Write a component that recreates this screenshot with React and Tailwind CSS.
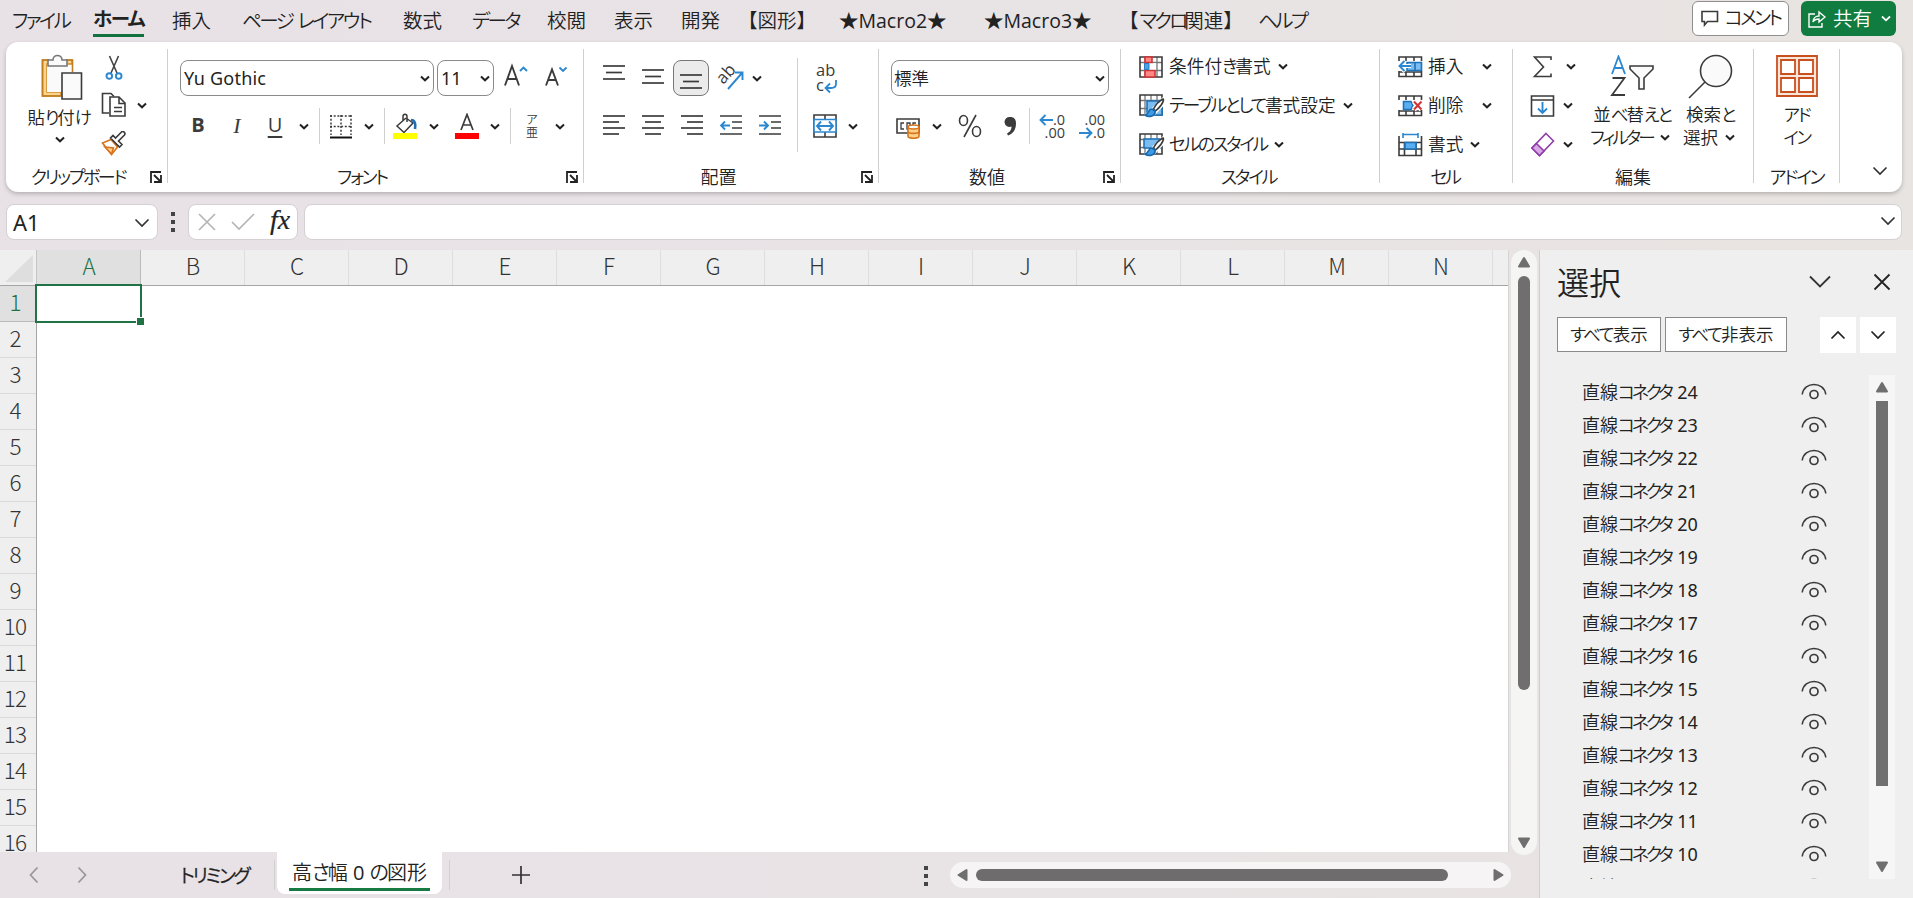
const menuItems = [
  { label: 'ファイル', className: 'w-[81px]' },
  { label: 'ホーム', className: 'w-[79px]', active: true, tight: 'tracking-[-0.08em]' },
  { label: '挿入', className: 'w-[70px]' },
  { label: 'ページ レイアウト', className: 'w-[161px]', tight: 'tracking-[-0.125em]' },
  { label: '数式', className: 'w-[69px]' },
  { label: 'データ', className: 'w-[75px]' },
  { label: '校閲', className: 'w-[67px]' },
  { label: '表示', className: 'w-[67px]' },
  { label: '開発', className: 'w-[57px]' },
  { label: '【図形】', className: 'w-[101px] [font-feature-settings:normal]' },
  { label: '★Macro2★', className: 'w-[145px] font-normal' },
  { label: '★Macro3★', className: 'w-[135px] font-normal' },
  { label: '【マクロ関連】', className: 'w-[139px] [font-feature-settings:normal]', tight: 'tracking-[-0.22em]' },
  { label: 'ヘルプ', className: 'w-[60px]' },
];

const columns = ['A', 'B', 'C', 'D', 'E', 'F', 'G', 'H', 'I', 'J', 'K', 'L', 'M', 'N'];
const rows = Array.from({ length: 16 }, (_, i) => i + 1);
const shapes = Array.from({ length: 16 }, (_, i) => 24 - i);

// Kana are set tighter than kanji, as in a UI font
function Jp({ children, tight = 'tracking-[-0.13em]' }) {
  return children.split(/([ぁ-ヿ]+)/).map((part, i) =>
    i % 2 ? (
      <span key={i} className={tight}>
        {part}
      </span>
    ) : (
      part
    )
  );
}

function Svg({ w, h, className = '', children }) {
  return (
    <svg
      width={w}
      height={h}
      viewBox={`0 0 ${w} ${h}`}
      fill="none"
      stroke="#3b3b3b"
      strokeWidth="1.6"
      className={`shrink-0 ${className}`}
    >
      {children}
    </svg>
  );
}

function Chevron({ className = 'w-5' }) {
  return (
    <span className={`flex shrink-0 justify-center ${className}`}>
      <Svg w={10} h={7}>
        <path d="M1 1.500 5 5.300 9 1.500" stroke="#222" strokeWidth="2" />
      </Svg>
    </span>
  );
}

function BigChevron({ className = '', color = '#333', up = false }) {
  return (
    <Svg w={16} h={10} className={className}>
      <path d={up ? 'M1.5 8.5 8 2l6.5 6.5' : 'M1.5 1.5 8 8l6.5-6.5'} stroke={color} strokeWidth="1.7" />
    </Svg>
  );
}

function Divider({ className = '' }) {
  return (
    <span className={`flex h-full shrink-0 justify-center ${className}`}>
      <span className="h-full w-px bg-[#d0d0d0]" />
    </span>
  );
}

function Cell({ className = '', children }) {
  return <span className={`flex h-full shrink-0 items-center justify-center ${className}`}>{children}</span>;
}

function Group({ label, launcher, className = '', labelClass = '', children }) {
  return (
    <section className={`mt-[7px] flex h-[134px] shrink-0 flex-col border-r border-[#cfcfcf] ${className}`}>
      <div className="flex min-h-0 flex-1">{children}</div>
      <div className="flex h-3 items-center">
        <span className={`flex-1 whitespace-nowrap text-center text-[18px] leading-3 ${labelClass}`}>
          <Jp>{label}</Jp>
        </span>
        {launcher && (
          <Svg w={12} h={12} className="mr-[5px]">
            <path d="M1 12V1h10M4 4l6 6M11 4v7H4" stroke="#222" strokeWidth="1.8" />
          </Svg>
        )}
      </div>
    </section>
  );
}

function Lines({ y, rows: lines }) {
  return (
    <Svg w={22} h={24}>
      {lines.map(([x1, x2], i) => (
        <path key={i} d={`M${x1} ${y[i]}H${x2}`} strokeWidth="1.7" />
      ))}
    </Svg>
  );
}

function PasteIcon() {
  return (
    <Svg w={42} h={46}>
      <path d="M8 6H1.500v36H20v-4H6V10h25V6h-6" fill="#fbd58a" stroke="#d18a2e" />
      <path d="M8 6H1.500v36H20M25 6h6.500v12" stroke="#c07c22" />
      <path d="M6 10h20v8h-6v20H6z" fill="#fafafa" stroke="none" />
      <path d="M7 12V6h5c0-6 9-6 9 0h5v6z" fill="#fafafa" stroke="#777" />
      <path d="M21 19h19.500v26H21z" fill="#fafafa" />
    </Svg>
  );
}

function ScissorsIcon() {
  return (
    <Svg w={18} h={26}>
      <path d="M4.500 1l7.500 17M13.500 1 6 18" stroke="#444" />
      <circle cx="4.300" cy="21" r="2.800" stroke="#2b88d0" strokeWidth="1.9" />
      <circle cx="13.700" cy="21" r="2.800" stroke="#2b88d0" strokeWidth="1.9" />
    </Svg>
  );
}

function CopyIcon() {
  return (
    <Svg w={26} h={26}>
      <path d="M8 21H1.500V1.500H10l3 3" />
      <path d="M9 5h9l6 6v13H9z" fill="#fff" />
      <path d="M18 5v6.500h6M13 15.500h8M13 19.500h8" />
    </Svg>
  );
}

function BrushIcon() {
  return (
    <Svg w={26} h={26}>
      <path d="M10 8.500 1.500 12l9 11.500L16.500 16z" fill="#fff" stroke="#d9731a" />
      <path d="M4 16l8.500 1-2 6z" fill="#fbd08a" stroke="#d9731a" />
      <path d="M9.500 7l9 9 2.500-2.500-3.500-3.500 6-6c1.500-2-1.500-4.500-3-3l-6 6L12 4.500z" fill="#fff" />
    </Svg>
  );
}

function BordersIcon() {
  return (
    <Svg w={24} h={25}>
      <path d="M1 2h22M1 12.500h22M2 1v20M12 1v20M22 1v20" strokeDasharray="2 1.700" strokeWidth="1.500" />
      <path d="M1 23.500h22" stroke="#111" strokeWidth="2" />
    </Svg>
  );
}

function FillIcon() {
  return (
    <Svg w={26} h={27}>
      <path d="M13 5 4 13l7 6.500 9-9.500-7-5M10 8V3.500c0-3 4-3 4 0V9" strokeWidth="1.500" />
      <path d="M18 7c4 0 5 4 4 9" stroke="#1f6fb5" strokeWidth="2.600" />
      <path d="M0 20h24v6H0z" fill="#ff0" stroke="none" />
    </Svg>
  );
}

function TableGrid() {
  return (
    <>
      <path d="M1 1h22v20H1z" fill="#fff" stroke="none" />
      <path d="M1 6.500h22M1 14.500h22M6 1v20M12 1v20M18 1v20" stroke="#777" strokeWidth="1.300" />
      <path d="M1 1h22v20H1z" />
    </>
  );
}

function ConditionalIcon() {
  return (
    <Svg w={24} h={22}>
      <TableGrid />
      <path d="M6 7h11v7H6z" fill="#fff" stroke="none" />
      <path d="M6 1h7v5.500H6zM6 14.500h10V21H6z" fill="#ff8a85" stroke="#d13438" />
      <path d="M5.500 7.500H10v6H5.500z" fill="#4aa3e8" stroke="#2b7cc0" strokeWidth="1" />
    </Svg>
  );
}

function TableStyleIcon({ cell = false }) {
  return (
    <Svg w={26} h={24}>
      <TableGrid />
      <path d={cell ? 'M5 6h16v9H5z' : 'M8 7h15v14H8z'} fill="#7dbcf0" stroke="#1d72b8" />
      <path d="M25 4 12 17l-6 5 9-2L25 9z" fill="#fff" stroke="#fff" strokeWidth="3" />
      <path d="M24 5c-4 2-8 7-9.500 10l2 2C20 14 24 9 24.500 6z" fill="#fff" />
      <path d="M13 15c-4 0-3 5-7 6 4 3 11 1 10-4z" fill="#3f9be3" stroke="#1668ad" />
    </Svg>
  );
}

function CellIcon({ kind }) {
  return (
    <Svg w={25} h={24}>
      {kind === 'format' ? (
        <>
          <path d="M1 3v19.500h22.500V3M1 9.500h22.500M1 16h22.500M6.500 9v14M18 9v14" />
          <path d="M7 9.500h11V16H7z" fill="#58aef0" stroke="#1d72b8" />
          <path d="M5 1.500h15M5 0v5M20 0v5" stroke="#2b88d0" />
        </>
      ) : (
        <>
          <path d="M1 6V2h22.500v4M1 16v5.500h22.500V16M8 2v4M16 2v4M8 17v4.500M16 17v4.500M1 17h22" />
          {kind === 'insert' ? (
            <>
              <path d="M9 7.500h14.500v8H9z" fill="#7dbcf0" stroke="#1d72b8" />
              <path d="M17 7.500v8" stroke="#1d72b8" />
              <path d="M13 11H1.500M7 5.500 1.500 11 7 16.500" stroke="#fff" strokeWidth="4" />
              <path d="M13 11H1.500M6.500 6 1.500 11l5 5" stroke="#2b88d0" strokeWidth="1.900" />
            </>
          ) : (
            <>
              <path d="M5.500 7.500H13l2 4-2 4H5.500z" fill="#58aef0" stroke="#1d72b8" />
              <path d="m16 7.500 7.500 8m0-8-7.500 8" stroke="#fff" strokeWidth="5" />
              <path d="m16 7.500 7.500 8m0-8-7.500 8" stroke="#d13438" strokeWidth="2" />
            </>
          )}
        </>
      )}
    </Svg>
  );
}

function EyeIcon() {
  return (
    <Svg w={26} h={18}>
      <path d="M1.200 11.500C3-2 23-2 24.800 11.500" strokeWidth="1.500" />
      <circle cx="13" cy="11.500" r="4" strokeWidth="1.700" />
    </Svg>
  );
}

function Triangle({ dir, className = '' }) {
  const paths = {
    up: 'M7 2 12 10.500H2z',
    down: 'M7 11 12 2.500H2z',
    left: 'M2.500 7 10.500 2v10z',
    right: 'M11.500 7 3.500 2v10z',
  };
  return (
    <Svg w={14} h={14} className={className}>
      <path d={paths[dir]} fill="#6f6f6f" stroke="#6f6f6f" strokeLinejoin="round" strokeWidth="2" />
    </Svg>
  );
}

function Dots() {
  return (
    <span className="flex flex-col gap-1">
      <span className="size-[4px] bg-[#444]" />
      <span className="size-[4px] bg-[#444]" />
      <span className="size-[4px] bg-[#444]" />
    </span>
  );
}

function MenuBar() {
  return (
    <nav className="flex h-[42px] shrink-0 pl-3">
      {menuItems.map((item) => (
        <div key={item.label} className={`shrink-0 whitespace-nowrap text-[19.500px] ${item.className}`}>
          <span
            className={`inline-flex h-[37px] items-center pt-1 ${
              item.active ? 'border-b-3 border-[#13703f] font-bold' : ''
            }`}
          >
            <span>
              <Jp tight={item.tight}>{item.label}</Jp>
            </span>
          </span>
        </div>
      ))}
      <button className="mt-px ml-auto flex h-[35px] w-[97px] shrink-0 items-center justify-center gap-[6px] whitespace-nowrap rounded-md border border-[#8f8f8f] bg-white text-[19px]">
        <Svg w={18} h={17}>
          <path d="M1 1.500h15.500v10H6.500L3.500 15v-3.500H1z" />
        </Svg>
        <span>
          <Jp tight="tracking-[-0.14em]">コメント</Jp>
        </span>
      </button>
      <button className="mt-px mr-[17px] ml-3 flex h-[35px] w-[95px] shrink-0 items-center rounded-md bg-[#107c3f] pl-[7px] text-[19.500px] text-white">
        <Svg w={18} h={18} className="mr-[7px]">
          <path d="M7 4H1v13h13v-4M5 12c0-4 3-6 6-6V2l6 5-6 5V9c-3 0-5 1-6 3z" stroke="#fff" strokeWidth="1.400" />
        </Svg>
        共有
        <Svg w={10} h={7} className="ml-[9px]">
          <path d="M1 1.500 5 5.300 9 1.500" stroke="#fff" strokeWidth="1.800" />
        </Svg>
      </button>
    </nav>
  );
}

function ClipboardGroup() {
  return (
    <Group label="クリップボード" launcher className="w-[162px]" labelClass="tracking-[0.01em]">
      <div className="flex w-[87px] flex-col items-center pt-[5px] pl-[18px]">
        <span className="pl-1.5">
          <PasteIcon />
        </span>
        <span className="mt-[5px] whitespace-nowrap text-[17.500px] leading-6">
          <Jp>貼り付け</Jp>
        </span>
        <Chevron className="mt-[7px] ml-[3px] w-5" />
      </div>
      <div className="flex flex-col pl-2">
        <span className="flex h-[37px] w-[26px] items-center justify-center">
          <ScissorsIcon />
        </span>
        <span className="flex h-[38px] items-center">
          <CopyIcon />
          <Chevron className="ml-[5px] w-5" />
        </span>
        <span className="flex h-[39px] items-center">
          <BrushIcon />
        </span>
      </div>
    </Group>
  );
}

function FontGroup() {
  return (
    <Group label="フォント" launcher className="w-[416px]" labelClass="pr-[10px]">
      <div className="flex flex-col gap-3 pt-[11px]">
        <div className="flex h-9 pl-3 font-['Noto_Sans','Noto_Sans_CJK_JP',sans-serif] text-[18px] font-normal">
          <div className="flex w-[254px] items-center justify-between rounded-lg border border-[#8a8a8a] bg-white pl-[3px] tracking-[0.2px]">
            Yu Gothic
            <Chevron className="w-4" />
          </div>
          <div className="ml-[3px] flex w-[57px] items-center justify-between rounded-lg border border-[#8a8a8a] bg-white pl-[3px]">
            11
            <Chevron className="w-4" />
          </div>
          <Cell className="ml-2 w-7 pb-1">
            <Svg w={26} h={26}>
              <path d="M2 22.500 9 3l7 19.500M4.500 16h9" strokeWidth="1.900" />
              <path d="m17 8 3.500-3.500L24 8" stroke="#2b88d0" strokeWidth="1.900" />
            </Svg>
          </Cell>
          <Cell className="ml-[12px] w-7 pb-1">
            <Svg w={24} h={26}>
              <path d="m2 22.500 6-16 6 16M4.500 17h7" strokeWidth="1.900" />
              <path d="m15.500 4.500 3.500 3.500 3.500-3.500" stroke="#2b88d0" strokeWidth="1.900" />
            </Svg>
          </Cell>
        </div>
        <div className="flex h-9 items-center pl-[10px] text-[#3b3b3b]">
          <Cell className="w-10 pb-[2px] text-[20px] font-bold">B</Cell>
          <Cell className="w-[38px] pb-[2px] font-['Liberation_Serif',serif] text-[22px] italic">I</Cell>
          <Cell className="w-[38px] pb-[2px] text-[20px] font-normal underline underline-offset-4">U</Cell>
          <Chevron className="w-5" />
          <Divider className="w-[11px]" />
          <Cell className="w-8">
            <BordersIcon />
          </Cell>
          <Chevron className="w-6" />
          <Divider className="w-[7px]" />
          <Cell className="w-9">
            <FillIcon />
          </Cell>
          <Chevron className="w-5" />
          <Cell className="ml-[5px] w-9">
            <Svg w={24} h={27}>
              <path d="m6 17 6-15.500L18 17M8 12h8" strokeWidth="1.700" />
              <path d="M0 20h24v6H0z" fill="#f00" stroke="none" />
            </Svg>
          </Cell>
          <Chevron className="w-5" />
          <Divider className="w-[10px]" />
          <Cell className="w-[34px] flex-col text-[12px] leading-[13px]">
            <span>ア</span>
            <span>亜</span>
          </Cell>
          <Chevron className="w-[22px]" />
        </div>
      </div>
    </Group>
  );
}

function AlignGroup() {
  return (
    <Group label="配置" launcher className="w-[295px]" labelClass="pr-[8px]">
      <div className="flex w-[208px] flex-col gap-3 pt-[11px] pl-[10px]">
        <div className="flex h-9">
          <Cell className="w-[39px] pb-[6px]">
            <Lines y={[3, 9.5, 16]} rows={[[0, 22], [3, 19], [0, 22]]} />
          </Cell>
          <Cell className="w-[39px] pb-[2px]">
            <Lines y={[5, 11.5, 18]} rows={[[0, 22], [3, 19], [0, 22]]} />
          </Cell>
          <Cell className="ml-px w-9 rounded-lg border border-[#777] bg-[#ebebeb] pt-[6px]">
            <Lines y={[6, 12.5, 19]} rows={[[0, 22], [3, 19], [0, 22]]} />
          </Cell>
          <Cell className="w-[39px] pl-1">
            <Svg w={26} h={26} className="overflow-visible">
              <text
                x="9"
                y="10"
                dy="4"
                textAnchor="middle"
                transform="rotate(-48 9 10)"
                fontSize="17"
                fill="#3b3b3b"
                stroke="none"
                className="font-['Open_Sans',sans-serif] font-normal"
              >
                ab
              </text>
              <path d="m10 24 14-16M17 7.500h7.500V15" stroke="#2b88d0" strokeWidth="1.900" />
            </Svg>
          </Cell>
          <Chevron className="mt-[15px] -ml-px w-[20px]" />
        </div>
        <div className="flex h-9">
          <Cell className="w-[39px]">
            <Lines y={[2, 8, 14, 20]} rows={[[0, 22], [0, 16], [0, 22], [0, 16]]} />
          </Cell>
          <Cell className="w-[39px]">
            <Lines y={[2, 8, 14, 20]} rows={[[0, 22], [3, 19], [0, 22], [3, 19]]} />
          </Cell>
          <Cell className="w-[39px]">
            <Lines y={[2, 8, 14, 20]} rows={[[0, 22], [6, 22], [0, 22], [6, 22]]} />
          </Cell>
          <Cell className="w-[39px]">
            <Svg w={22} h={24}>
              <path d="M0 2h22M12 8h10M12 14h10M0 20h22" />
              <path d="M10 11.500H1M5 7.500l-4 4 4 4" stroke="#2b88d0" strokeWidth="1.900" />
            </Svg>
          </Cell>
          <Cell className="w-[39px]">
            <Svg w={22} h={24}>
              <path d="M0 2h22M12 8h10M12 14h10M0 20h22" />
              <path d="M0 11.500h9M5 7.500l4 4-4 4" stroke="#2b88d0" strokeWidth="1.900" />
            </Svg>
          </Cell>
        </div>
      </div>
      <Divider className="mt-[9px] !h-[94px] w-[10px]" />
      <div className="flex flex-col gap-3 pt-[11px]">
        <div className="flex h-9">
          <Cell className="ml-[14px] w-[24px] flex-col items-start text-[16.500px] leading-[13px] font-normal text-[#3b3b3b]">
            <span>ab</span>
            <span className="flex items-center">
              c
              <Svg w={14} h={14} className="mt-1 -mr-1">
                <path d="M12 0v4c0 3-2 4-5 4H2M6 3.500 1.500 8 6 12.500" stroke="#2b88d0" strokeWidth="1.800" />
              </Svg>
            </span>
          </Cell>
        </div>
        <div className="flex h-9 items-center pl-[8px]">
          <Cell className="w-[30px]">
            <Svg w={24} h={24}>
              <path d="M1 1h22v22H1zM12 1v5M12 18v5" />
              <path d="M1 5.500h22v12.500H1z" fill="#fff" stroke="#2b88d0" />
              <path d="M4 12h16M8 7.500 4 12l4 4.500M16 7.500l4 4.500-4 4.500" stroke="#2b88d0" strokeWidth="1.900" />
            </Svg>
          </Cell>
          <Chevron className="ml-[3px] w-5" />
        </div>
      </div>
    </Group>
  );
}

function NumberGroup() {
  return (
    <Group label="数値" launcher className="w-[242px]" labelClass="pr-[8px]">
      <div className="flex flex-col gap-3 pt-[11px] pl-3">
        <div className="flex h-9 w-[218px] items-center justify-between rounded-lg border border-[#8a8a8a] bg-white pl-[2px] text-[17.500px]">
          標準
          <Chevron className="w-4" />
        </div>
        <div className="flex h-9 items-center">
          <Cell className="w-9 pt-1">
            <Svg w={26} h={22}>
              <path d="M1 2h22v14H1z" />
              <path d="M8 6H5v6h3M11 6h3v6h-3zM17 12V6h3" strokeWidth="1.300" />
              <path d="M12 10v9c0 3 11 3 11 0v-9" fill="#fbd08a" stroke="#d9731a" />
              <ellipse cx="17.500" cy="10" rx="5.500" ry="2" fill="#fff" stroke="#d9731a" />
              <path d="M12 14.500c0 2.500 11 2.500 11 0" stroke="#d9731a" />
            </Svg>
          </Cell>
          <Chevron className="w-5" />
          <Cell className="w-[46px]">
            <Svg w={24} h={24}>
              <ellipse cx="5.500" cy="6.500" rx="4" ry="5" />
              <ellipse cx="18.500" cy="17.500" rx="4" ry="5" />
              <path d="M18 1 6 23" />
            </Svg>
          </Cell>
          <Cell className="w-[35px]">
            <Svg w={14} h={22}>
              <path
                d="M6.500 2a5 5 0 1 0 1 9.500c0 4-2 5.500-4.500 7l1 2C9 18.500 12 15 12 8c0-4-2.500-6-5.500-6z"
                fill="#3b3b3b"
                stroke="none"
              />
            </Svg>
          </Cell>
          <Divider className="w-[3px]" />
          <Cell className="w-[40px] flex-col items-end pr-[6px] text-[14.500px] leading-[13px] font-normal text-[#3b3b3b]">
            <span className="flex items-center">
              <Svg w={14} h={12}>
                <path d="M14 6H1.500M6.500 1l-5 5 5 5" stroke="#2b88d0" strokeWidth="1.900" />
              </Svg>
              .0
            </span>
            <span>.00</span>
          </Cell>
          <Cell className="w-[40px] flex-col items-end pr-[6px] text-[14.500px] leading-[13px] font-normal text-[#3b3b3b]">
            <span>.00</span>
            <span className="flex items-center">
              <Svg w={14} h={12}>
                <path d="M0 6h12.500M7.500 1l5 5-5 5" stroke="#2b88d0" strokeWidth="1.900" />
              </Svg>
              .0
            </span>
          </Cell>
        </div>
      </div>
    </Group>
  );
}

function IconRow({ icon, label, chevron = 'w-6', tight }) {
  return (
    <div className="flex h-[39px] items-center whitespace-nowrap text-[17.700px]">
      <span className="w-[30px] shrink-0">{icon}</span>
      <span>
        <Jp tight={tight}>{label}</Jp>
      </span>
      <Chevron className={chevron} />
    </div>
  );
}

function StyleGroup() {
  return (
    <Group label="スタイル" className="w-[259px]" labelClass="pr-[3px]">
      <div className="-mt-[2px] flex flex-col pl-[18px]">
        <IconRow icon={<ConditionalIcon />} label="条件付き書式" />
        <IconRow icon={<TableStyleIcon />} label="テーブルとして書式設定" tight="tracking-[-0.12em]" />
        <IconRow icon={<TableStyleIcon cell />} label="セルのスタイル" />
      </div>
    </Group>
  );
}

function CellsGroup() {
  return (
    <Group label="セル" className="w-[133px]" labelClass="pr-[2px]">
      <div className="-mt-[2px] flex flex-col pl-[18px]">
        <IconRow icon={<CellIcon kind="insert" />} label="挿入" chevron="w-12" />
        <IconRow icon={<CellIcon kind="delete" />} label="削除" chevron="w-12" />
        <IconRow icon={<CellIcon kind="format" />} label="書式" />
      </div>
    </Group>
  );
}

function EditGroup() {
  return (
    <Group label="編集" className="w-[241px]">
      <div className="-mt-[2px] flex w-[75px] flex-col pl-[17px]">
        <span className="flex h-[39px] items-center">
          <Svg w={25} h={24}>
            <path d="M21 5V2H4.500l9 10-9 9.500H21v-3" />
          </Svg>
          <Chevron className="ml-[6px] w-5" />
        </span>
        <span className="flex h-[39px] items-center">
          <Svg w={25} h={24}>
            <path d="M1.500 2h22v20h-22zM1.500 6h22" />
            <path d="M12.500 8v11M8 14.500l4.500 4.500 4.500-4.500" stroke="#2b88d0" strokeWidth="1.900" />
          </Svg>
          <Chevron className="ml-[3px] w-5" />
        </span>
        <span className="flex h-[39px] items-center">
          <Svg w={25} h={25}>
            <path d="M16 1.500 23.500 9 9.500 23.500 2 16z" fill="#fff" stroke="#8f3fa8" />
            <path d="M6.500 11.500 14 19l-4.500 4.500L2 16z" fill="#d9a6e6" stroke="#8f3fa8" />
          </Svg>
          <Chevron className="ml-[3px] w-5" />
        </span>
      </div>
      <div className="flex w-[88px] flex-col items-center pt-[6px] text-[17.500px] leading-[23px]">
        <Svg w={44} h={43}>
          <path d="M2 19 8.500 1.500 15 19M4.500 13h8" stroke="#2b88d0" strokeWidth="1.800" />
          <path d="M2.500 23h12L2 40h13" strokeWidth="1.800" />
          <path d="M20 11h23v3l-9 9v11h-5V23l-9-9z" fill="#fafafa" />
        </Svg>
        <span className="mt-[5px] whitespace-nowrap">
          <Jp>並べ替えと</Jp>
        </span>
        <span className="flex items-center pl-[3px] whitespace-nowrap">
          <span>
            <Jp tight="tracking-[-0.16em]">フィルター</Jp>
          </span>
          <Chevron className="w-6" />
        </span>
      </div>
      <div className="flex w-[66px] flex-col items-center pt-[5px] pl-[2px] text-[17.500px] leading-[23px]">
        <Svg w={46} h={45}>
          <circle cx="29" cy="17" r="15.500" fill="#fafafa" />
          <path d="M18 28 2 44" />
        </Svg>
        <span className="mt-1 whitespace-nowrap">
          <Jp>検索と</Jp>
        </span>
        <span className="flex items-center pl-[5px] whitespace-nowrap">
          選択
          <Chevron className="w-6" />
        </span>
      </div>
    </Group>
  );
}

function AddinGroup() {
  return (
    <Group label="アドイン" className="w-[86px]">
      <div className="flex flex-1 flex-col items-center pt-[6px] text-[17.500px] leading-[23px]">
        <Svg w={42} h={42}>
          <path d="M1 1h40v40H1z" fill="#fbe6dc" stroke="#c8501e" strokeWidth="1.800" />
          <path d="M5 5h14v14H5zM23 5h14v14H23zM5 23h14v14H5zM23 23h14v14H23z" fill="#fff" stroke="#c8501e" strokeWidth="1.800" />
        </Svg>
        <span className="mt-[6px]">
          <Jp>アド</Jp>
        </span>
        <span>
          <Jp>イン</Jp>
        </span>
      </div>
    </Group>
  );
}

function Ribbon() {
  return (
    <div className="mr-[11px] ml-[6px] flex h-[150px] shrink-0 rounded-xl bg-white shadow-[0_2px_4px_rgba(0,0,0,0.22)]">
      <ClipboardGroup />
      <FontGroup />
      <AlignGroup />
      <NumberGroup />
      <StyleGroup />
      <CellsGroup />
      <EditGroup />
      <AddinGroup />
      <div className="flex flex-1 items-end justify-center pb-4 pl-[18px]">
        <BigChevron />
      </div>
    </div>
  );
}

function FormulaBar() {
  return (
    <div className="mt-[12px] flex h-[36px] shrink-0 pr-[11px] pl-[6px]">
      <div className="flex w-[152px] items-center justify-between rounded-lg border border-[#d5d0d4] bg-white pt-px pr-[7px] pl-[6px] font-['Noto_Sans',sans-serif] text-[22px] font-normal">
        A1
        <BigChevron />
      </div>
      <div className="flex w-[30px] items-center justify-center">
        <Dots />
      </div>
      <div className="flex w-[110px] items-center rounded-lg border border-[#d5d0d4] bg-white pl-[9px]">
        <Svg w={18} h={20}>
          <path d="m1 2 16 16M17 2 1 18" stroke="#b5b5b5" strokeWidth="1.700" />
        </Svg>
        <Svg w={24} h={20} className="ml-[15px]">
          <path d="m1 10 7 7L23 2" stroke="#b5b5b5" strokeWidth="1.700" />
        </Svg>
        <span className="ml-[15px] pb-1 font-['Liberation_Serif',serif] text-[28px] leading-7 text-[#222] italic [-webkit-text-stroke:0.2px_#222]">
          fx
        </span>
      </div>
      <div className="ml-[6px] flex flex-1 items-center justify-end rounded-lg border border-[#d5d0d4] bg-white pr-[5px] pb-[3px]">
        <BigChevron />
      </div>
    </div>
  );
}

function Sheet() {
  return (
    <div className="flex h-[602px] w-[1509px] shrink-0 flex-col overflow-hidden border-r border-[#d5d5d5] bg-white font-['Noto_Sans_CJK_JP',sans-serif] text-[22.500px] font-light text-[#333]">
      <div className="flex h-[36px] shrink-0 border-b border-[#a5a5a5] bg-[#efefef]">
        <div className="flex w-[37px] shrink-0 items-end justify-end border-r border-[#c4c4c4] pr-[3px] pb-[3px]">
          <Svg w={28} h={27}>
            <path d="M28 0v27H0z" fill="#dedede" stroke="none" />
          </Svg>
        </div>
        {columns.map((col) => (
          <div
            key={col}
            className={`flex w-[104px] shrink-0 items-center justify-center border-r pb-1 pl-px ${
              col === 'A' ? 'border-[#bbb] bg-[#e0e0e0] text-[#217346]' : 'border-[#dedede]'
            }`}
          >
            {col}
          </div>
        ))}
      </div>
      <div className="flex min-h-0 flex-1">
        <div className="w-[37px] shrink-0 border-r border-[#a5a5a5] bg-[#efefef]">
          {rows.map((row) => (
            <div
              key={row}
              className={`flex h-9 items-center justify-center border-b pr-[6px] pb-[4px] tracking-[-0.8px] ${
                row === 1 ? 'border-[#bbb] bg-[#e0e0e0] text-[#217346]' : 'border-[#dadada]'
              }`}
            >
              {row}
            </div>
          ))}
        </div>
        <div className="relative -mt-[2px] -ml-[2px] h-[39px] w-[107px] border-2 border-[#217346]">
          <span className="absolute -right-[4px] -bottom-[4px] size-[8px] border-t border-l border-white bg-[#217346]" />
        </div>
      </div>
    </div>
  );
}

function SheetTabs() {
  return (
    <div className="flex h-[46px] shrink-0">
      <div className="flex w-[166px] items-center pl-[29px]">
        <Svg w={10} h={18}>
          <path d="M8.500 1.500 1.500 9l7 7.500" stroke="#999" strokeWidth="1.800" />
        </Svg>
        <Svg w={10} h={18} className="ml-[38px]">
          <path d="m1.500 1.500 7 7.500-7 7.500" stroke="#999" strokeWidth="1.800" />
        </Svg>
      </div>
      <div className="flex w-[105px] shrink-0 items-center pt-[2px] pl-[14px] text-[19px] whitespace-nowrap [-webkit-text-stroke:0.3px_#222]">
        <span>
          <Jp tight="tracking-[-0.12em]">トリミング</Jp>
        </span>
      </div>
      <Divider className="w-[6px] items-center !h-[38px] pt-[8px]" />
      <div className="flex h-[42px] w-[165px] shrink-0 flex-col items-center rounded-b-lg bg-white pt-[6px]">
        <span className="h-[30px] text-[20px] leading-[30px] whitespace-nowrap">
          <Jp tight="tracking-[-0.1em]">高さ幅 </Jp>
          <b className="font-medium">0</b>
          <Jp tight="tracking-[-0.1em]"> の図形</Jp>
        </span>
        <span className="h-[3px] w-[141px] bg-[#187a43]" />
      </div>
      <Divider className="w-[14px] !h-[38px] pt-[8px]" />
      <div className="flex flex-1 items-center pb-px pl-[56px]">
        <Svg w={18} h={18}>
          <path d="M9 0v18M0 9h18" stroke="#333" strokeWidth="1.700" />
        </Svg>
      </div>
      <div className="mr-[11px] flex w-[27px] items-center justify-center pt-[2px]">
        <Dots />
      </div>
      <div className="mt-[10px] flex h-[26px] w-[561px] shrink-0 items-center rounded-full bg-[#f6f4f5]">
        <Triangle dir="left" className="ml-[6px]" />
        <span className="ml-[6px] h-3 w-[472px] rounded-full bg-[#6f6c6d]" />
        <Triangle dir="right" className="mr-[6px] ml-auto" />
      </div>
      <div className="w-7 shrink-0" />
    </div>
  );
}

function SelectionPane() {
  return (
    <aside className="flex w-[374px] shrink-0 flex-col border-l border-[#cfcfcf] bg-[#efefef] pl-[17px]">
      <div className="flex h-[67px] items-center pb-1">
        <h2 className="pt-[2px] text-[32px]">選択</h2>
        <Svg w={22} h={14} className="mr-[42px] ml-auto">
          <path d="m1 1.500 10 10 10-10" stroke="#333" strokeWidth="1.800" />
        </Svg>
        <Svg w={18} h={18} className="mr-[22px]">
          <path d="m1.500 1.500 15 15m0-15-15 15" stroke="#222" strokeWidth="1.800" />
        </Svg>
      </div>
      <div className="flex h-9 items-start text-[17.500px] whitespace-nowrap">
        <button className="h-[35px] w-[104px] border border-[#8a8a8a] bg-white">
          <Jp tight="tracking-[-0.1em]">すべて表示</Jp>
        </button>
        <button className="ml-1 h-[35px] w-[122px] border border-[#8a8a8a] bg-white">
          <Jp tight="tracking-[-0.1em]">すべて非表示</Jp>
        </button>
        <button className="mr-1 ml-auto flex size-9 items-center justify-center bg-white">
          <BigChevron up color="#222" />
        </button>
        <button className="mr-[17px] flex size-9 items-center justify-center bg-white">
          <BigChevron color="#222" />
        </button>
      </div>
      <div className="mt-[22px] flex h-[504px]">
        <ul className="flex-1 overflow-hidden pl-[25px]">
          {shapes.map((n) => (
            <li key={n} className="flex h-[33px] items-center justify-between pr-[42px] text-[18px]">
              <span className="pt-px whitespace-nowrap">
                <Jp tight="tracking-[-0.18em]">直線コネクタ</Jp>
                <span className="ml-[2px] font-['Noto_Sans',sans-serif] font-normal"> {n}</span>
              </span>
              <EyeIcon />
            </li>
          ))}
        </ul>
        <div className="mr-[18px] flex w-[26px] shrink-0 flex-col items-center bg-[#f6f6f6] pt-[6px] pb-[5px]">
          <Triangle dir="up" />
          <span className="mt-[6px] h-[385px] w-3 bg-[#707070]" />
          <Triangle dir="down" className="mt-auto" />
        </div>
      </div>
    </aside>
  );
}

export default function App() {
  return (
    <div className="flex h-[898px] w-[1913px] flex-col overflow-hidden bg-linear-to-r from-[#e8e2e7] via-[#e8e3e5] to-[#e8e4e1] font-['Open_Sans','Noto_Sans_CJK_JP',sans-serif] font-[350] text-[#222] [font-feature-settings:'palt']">
      <MenuBar />
      <Ribbon />
      <FormulaBar />
      <div className="mt-[10px] flex min-h-0 flex-1">
        <div className="flex w-[1539px] shrink-0 flex-col">
          <div className="flex h-[602px]">
            <Sheet />
            <div className="ml-[2px] flex h-[605px] w-[26px] shrink-0 flex-col items-center rounded-full bg-[#f5f5f4] pt-[6px] pb-[5px]">
              <Triangle dir="up" />
              <span className="mt-[6px] h-[414px] w-3 rounded-full bg-[#706e6e]" />
              <Triangle dir="down" className="mt-auto" />
            </div>
          </div>
          <SheetTabs />
        </div>
        <SelectionPane />
      </div>
    </div>
  );
}
